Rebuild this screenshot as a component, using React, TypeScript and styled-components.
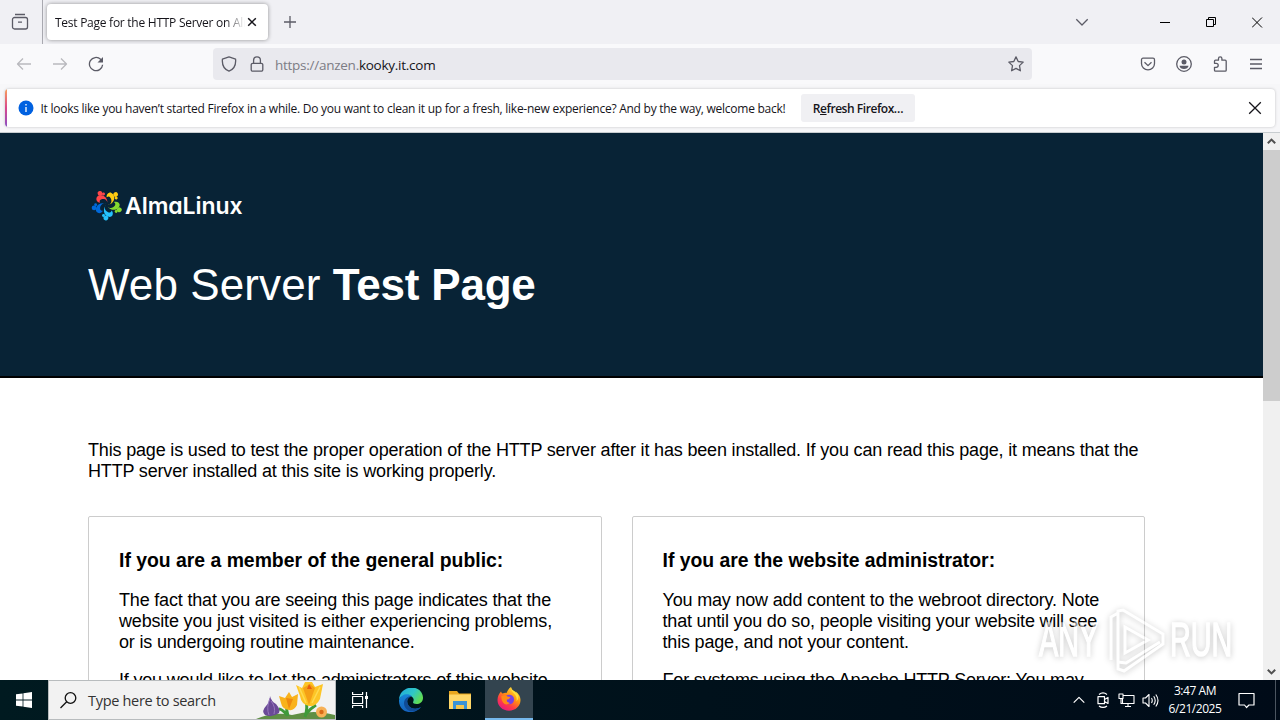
import React from 'react';
import styled, { createGlobalStyle } from 'styled-components';

const App: React.FC = () => {
  return (
    <Screen>
      <GlobalStyle />
      <TabBar>
        <FirefoxView>
          <Icon $size={18} viewBox="0 0 18 18">
            <path d="M4 1.500h10M3.500 4.500h11a2 2 0 0 1 2 2v7.500a2 2 0 0 1-2 2h-11a2 2 0 0 1-2-2v-7.500a2 2 0 0 1 2-2zM7 9.200h4" />
          </Icon>
        </FirefoxView>
        <Tab>
          <TabTitle>Test Page for the HTTP Server on AlmaLinux</TabTitle>
          <Icon $size={10} $color="#15141a" $stroke={1.5} viewBox="0 0 10 10">
            <path d="M1.200 1.200l7.600 7.600M8.800 1.200l-7.600 7.600" />
          </Icon>
        </Tab>
        <NewTab>
          <Icon $size={14} viewBox="0 0 14 14">
            <path d="M7 1v12M1 7h12" />
          </Icon>
        </NewTab>
        <WindowControls>
          <ControlCell $width={120}>
            <Icon $size={14} viewBox="0 0 14 14">
              <path d="M1.300 4.300L7 10l5.700-5.700" />
            </Icon>
          </ControlCell>
          <ControlCell $width={46}>
            <Icon $size={11} $color="#000" $stroke={1} viewBox="0 0 11 11">
              <path d="M0 5.500h10" />
            </Icon>
          </ControlCell>
          <ControlCell $width={46}>
            <Icon $size={11} $color="#000" $stroke={1} viewBox="0 0 11 11">
              <path d="M.5 2.500h7v7h-7zM2.500 2.500v-2h7v7h-2" />
            </Icon>
          </ControlCell>
          <ControlCell $width={46}>
            <Icon $size={11} $color="#000" $stroke={1} viewBox="0 0 11 11">
              <path d="M0 .500l10 10M10 .500l-10 10" />
            </Icon>
          </ControlCell>
        </WindowControls>
      </TabBar>

      <NavBar>
        <NavButtons>
          <Icon $size={16} $color="#b9b9be" viewBox="0 0 16 16">
            <path d="M15 8H1.500M7 2.500L1.500 8 7 13.500" />
          </Icon>
          <Icon $size={16} $color="#b9b9be" viewBox="0 0 16 16">
            <path d="M1 8h13.500M9 2.500L14.500 8 9 13.500" />
          </Icon>
          <Icon $size={16} viewBox="0 0 16 16">
            <path d="M14.600 8.700A6.600 6.600 0 1 1 12.600 3.300L14 4.700" />
            <path d="M15 1v5.500H9.500z" fill="#5b5b66" stroke="none" />
          </Icon>
        </NavButtons>
        <UrlBar>
          <Icon $size={16} viewBox="0 0 16 16">
            <path d="M8 .9l6.600 2.300c.4 4.600-.8 9.600-6.600 12C2.200 12.800 1 7.800 1.400 3.200z" />
          </Icon>
          <Icon $size={16} viewBox="0 0 16 16">
            <path d="M3.700 7.300h8.600a1.500 1.500 0 0 1 1.500 1.500v4.900a1.500 1.500 0 0 1-1.500 1.500H3.700a1.500 1.500 0 0 1-1.500-1.500V8.800a1.500 1.500 0 0 1 1.500-1.500zM4.600 7.300V4.200a3.400 3.400 0 0 1 6.800 0v3.100" />
          </Icon>
          <Url>
            https://anzen.<strong>kooky.it.com</strong>
          </Url>
          <Icon $size={16} viewBox="0 0 16 16">
            <path d="M8 .9l2.200 4.600 5 .6-3.700 3.500.9 5.200L8 12.400l-4.400 2.400.9-5.200L.8 6.100l5-.6z" />
          </Icon>
        </UrlBar>
        <ToolbarActions>
          <Icon $size={16} viewBox="0 0 16 16">
            <path d="M3 2.200h10a1.500 1.500 0 0 1 1.500 1.500v3.700a6.500 6.500 0 0 1-13 0V3.700A1.500 1.500 0 0 1 3 2.200zM4.500 6.200L8 9.600l3.500-3.400" />
          </Icon>
          <Icon $size={16} viewBox="0 0 16 16">
            <circle cx="8" cy="8" r="7.300" />
            <g fill="#5b5b66" stroke="none">
              <circle cx="8" cy="5.900" r="2.500" />
              <path d="M3.500 9.700h9c0 2-2.300 3.300-4.500 3.300S3.500 11.700 3.500 9.700z" />
            </g>
          </Icon>
          <Icon $size={16} viewBox="0 0 16 16">
            <path d="M2.500 7.300V5.200a1 1 0 0 1 1-1h3V2.500a1.700 1.700 0 0 1 3.400 0v1.700h3.300a1 1 0 0 1 1 1v9a1 1 0 0 1-1 1H3.500a1 1 0 0 1-1-1v-2.900h1.700a1.900 1.900 0 0 0 0-4z" />
          </Icon>
          <Icon $size={16} viewBox="0 0 16 16">
            <path d="M2 3.500h12M2 8h12M2 12.500h12" />
          </Icon>
        </ToolbarActions>
      </NavBar>

      <NotificationArea>
        <Notification>
          <InfoBadge viewBox="0 0 16 16">
            <circle cx="8" cy="8" r="7.500" fill="#0061e0" />
            <path d="M8 7v5M8 4v1.500" stroke="#fff" strokeWidth="1.300" />
          </InfoBadge>
          <NotificationText>
            It looks like you haven’t started Firefox in a while. Do you want to clean it up for a fresh, like-new
            experience? And by the way, welcome back!
          </NotificationText>
          <RefreshButton>
            R<u>e</u>fresh Firefox…
          </RefreshButton>
          <CloseNotification>
            <Icon $size={14} $color="#15141a" viewBox="0 0 14 14">
              <path d="M1.200 1.200l11.600 11.600M12.800 1.200L1.200 12.800" />
            </Icon>
          </CloseNotification>
        </Notification>
      </NotificationArea>

      <Viewport>
        <Page>
          <Hero>
            <Brand>
              <AlmaMark />
              <BrandName>AlmaLinux</BrandName>
            </Brand>
            <Title>
              Web Server <strong>Test Page</strong>
            </Title>
          </Hero>
          <Content>
            <Intro>
              This page is used to test the proper operation of the HTTP server after it has been installed. If you can
              read this page, it means that the
              <br />
              HTTP server installed at this site is working properly.
            </Intro>
            <Cards>
              <Card>
                <CardTitle>If you are a member of the general public:</CardTitle>
                <Paragraph>
                  The fact that you are seeing this page indicates that the
                  <br />
                  website you just visited is either experiencing problems,
                  <br />
                  or is undergoing routine maintenance.
                </Paragraph>
                <Paragraph>If you would like to let the administrators of this website</Paragraph>
              </Card>
              <Card>
                <CardTitle>If you are the website administrator:</CardTitle>
                <Paragraph>
                  You may now add content to the webroot directory. Note
                  <br />
                  that until you do so, people visiting your website will see
                  <br />
                  this page, and not your content.
                </Paragraph>
                <Paragraph>For systems using the Apache HTTP Server: You may</Paragraph>
              </Card>
            </Cards>
          </Content>
        </Page>
        <Scrollbar>
          <ScrollArrow viewBox="0 0 17 17">
            <path d="M4.800 10.300l3.700-3.700 3.700 3.700" />
          </ScrollArrow>
          <ScrollThumb />
          <ScrollArrow viewBox="0 0 17 17">
            <path d="M4.800 6.700l3.700 3.700 3.700-3.700" />
          </ScrollArrow>
        </Scrollbar>
        <Watermark>
          <WatermarkWord>ANY</WatermarkWord>
          <svg width="60" height="66" viewBox="0 0 60 66" fill="none" stroke="#fff" strokeWidth="3">
            <path d="M5 53V10l7-4M12 55V4l5-1 40 24v5M19 46V20l23 13zM12 55l8 1 34-21M12 55v7l6 2 39-27v-5" />
          </svg>
          <WatermarkWord>RUN</WatermarkWord>
        </Watermark>
      </Viewport>

      <Taskbar>
        <StartButton>
          <svg width="16" height="16" viewBox="0 0 16 16" fill="#fff">
            <path d="M0 2.300l6.600-.9v6.200H0zM7.400 1.300L16 0v7.600H7.400zM0 8.400h6.600v6.200L0 13.700zM7.400 8.400H16V16l-8.600-1.200z" />
          </svg>
        </StartButton>
        <Search>
          <Icon $size={18} $color="#111" $stroke={1.3} viewBox="0 0 18 18">
            <circle cx="10.500" cy="7" r="5.300" />
            <path d="M6.700 10.800L.5 17" />
          </Icon>
          <SearchText>Type here to search</SearchText>
          <Flowers />
        </Search>
        <TaskButton $width={48}>
          <Icon $size={18} $color="#fff" $stroke={1.2} viewBox="0 0 18 18">
            <path d="M1.600 1v2.500h10V1M1.600 5.500h10v7h-10zM1.600 17v-2.500h10V17M15.500 1v16" />
            <path d="M14 5h3v3h-3z" fill="#fff" stroke="none" />
          </Icon>
        </TaskButton>
        <TaskButton $width={53}>
          <EdgeLogo />
        </TaskButton>
        <TaskButton $width={48}>
          <FolderLogo />
        </TaskButton>
        <TaskButton $width={48} $active>
          <FirefoxLogo />
        </TaskButton>
        <Tray>
          <Icon $size={18} $color="#fff" $stroke={1.2} viewBox="-3 -3 18 18">
            <path d="M.7 8.700L6 3.400l5.300 5.300" />
          </Icon>
          <Icon $size={16} $color="#fff" $stroke={1.2} viewBox="0 0 16 16">
            <path d="M3 4.700h6.500v7H3zM9.500 7.500l3.500-2v6l-3.500-2M4 2.500Q8-.7 12 2.500M4 13.900q4 3 8 0" />
          </Icon>
          <Icon $size={17} $color="#fff" $stroke={1.1} viewBox="0 0 17 17">
            <path d="M5 3.500h11v8H4.500V7M1 2h4v4.500H1zM3 6.500v5h2M10 11.500v3M7 14.500h6" />
          </Icon>
          <Icon $size={17} $color="#fff" $stroke={1.1} viewBox="0 0 17 17">
            <path d="M1 6h2.500L7 2.500v12L3.500 11H1zM9.500 6q1.500 2.500 0 5M11.700 4.200q3 4.300 0 8.600M13.800 2.500q4.400 6 0 12" />
          </Icon>
        </Tray>
        <Clock>
          <ClockLine>3:47 AM</ClockLine>
          <ClockLine>6/21/2025</ClockLine>
        </Clock>
        <ActionCenter>
          <Icon $size={17} $color="#fff" $stroke={1.2} viewBox="0 0 17 17">
            <path d="M1 1.500h15v11.500h-5L8.500 15.500 6.500 13H1z" />
          </Icon>
        </ActionCenter>
        <ShowDesktop />
      </Taskbar>
    </Screen>
  );
};

const almaArms = [
  { color: '#ff4649', angle: -14 },
  { color: '#ffcb12', angle: 58 },
  { color: '#86da2f', angle: 130 },
  { color: '#24c2ff', angle: 202 },
  { color: '#0069da', angle: 274 },
];

const AlmaMark: React.FC = () => (
  <svg width="32" height="32" viewBox="-17 -15.700 32 32">
    {almaArms.map(({ color, angle }) => (
      <g key={color} transform={`rotate(${angle})`} fill={color}>
        <path d="M.8-.5C1.800-4-.5-7-4.500-6.600c-1.500.2-2 1.300-1.900 3-2.600-1.200-3.400-4.200-1.700-6.200C-4.500-12.500 3-9.500.8-.5z" />
        <circle cx="-4" cy="-12.700" r="2.400" />
        <circle cx="-.8" cy="-11.300" r="1.500" />
      </g>
    ))}
  </svg>
);

const Flowers: React.FC = () => (
  <svg width="79" height="38" viewBox="0 0 79 38">
    <path d="M0 38Q18 30 36 34q22-6 43 0v4z" fill="#5f8f45" />
    <path d="M32 35q-2-6-1-12M49 36q3-9 1-17M50 33q5-6 10-9M31 34q-5-6-8-6" stroke="#3f9a3b" strokeWidth="3" fill="none" />
    <path d="M14 15q1 5 6 8 5 6 3 9-7 5-14 2-4-4 1-9 4-4 4-10z" fill="#6a4a97" />
    <path d="M14 17q-4 10-1 17M15 20q5 6 3 13" stroke="#9678bd" fill="none" />
    <path d="M23 15l6 2 4-6 3 5 6-3-1 11q-3 6-8 5-7-1-8-7z" fill="#f9b21c" />
    <path d="M30 17l3 11 4-10z" fill="#ee8a10" />
    <path d="M40 4l6 3 3-6 7 0 3 5 8-3-3 15q-4 8-11 7-8-2-9-10z" fill="#fdc526" />
    <path d="M47 7l6 17 6-17-5-4z" fill="#f4a016" />
    <path d="M43 6l7 16M64 6l-8 16" stroke="#ffda50" strokeWidth="1.500" />
    <path d="M51 8l2-5 3 5z" fill="#e95d0c" />
    <circle cx="65.500" cy="31" r="5.500" fill="#f7b156" />
    <circle cx="65.500" cy="31" r="2.200" fill="#d96b16" />
  </svg>
);

const EdgeLogo: React.FC = () => (
  <svg width="24" height="24" viewBox="0 0 24 24">
    <defs>
      <linearGradient id="edgeTop" x1="0" y1="0" x2="1" y2=".5">
        <stop offset="0" stopColor="#1fa8e0" />
        <stop offset=".6" stopColor="#2fc7c6" />
        <stop offset="1" stopColor="#5fdc55" />
      </linearGradient>
      <linearGradient id="edgeSide" x1="0" y1="0" x2="0" y2="1">
        <stop offset="0" stopColor="#1787d8" />
        <stop offset="1" stopColor="#1461bd" />
      </linearGradient>
    </defs>
    <path d="M0 11.500C1-3.500 23-4.500 24 9.500c.2 4-3 6.500-6.500 6.500-3 0-4-1.300-3.200-2.600C17 8 5 3.500 0 11.500z" fill="url(#edgeTop)" />
    <path d="M0 12C2 6 9 4.500 12.800 8 8 9.500 7 14 9.500 17.500c3 4 8.500 4 12.500 1.500C15 28-.5 25 0 12z" fill="url(#edgeSide)" />
    <path d="M12.800 8C8 9.500 7 14 9.500 17.500c3 4 8.500 4 12.500 1.500-4 5-11 6-15 1.500C3 16 5 8.500 12.800 8z" fill="#104b95" />
  </svg>
);

const FolderLogo: React.FC = () => (
  <svg width="24" height="20" viewBox="0 0 24 20">
    <path d="M0 1h8l2 2.500h12V19H0z" fill="#e9a71f" />
    <path d="M0 4.500h22V19H0z" fill="#ffd768" />
    <path d="M4 11h14v8h-3v-4H7v4H4z" fill="#3a93d5" />
    <path d="M7 15h8v4H7z" fill="#f5c64c" />
  </svg>
);

const FirefoxLogo: React.FC = () => (
  <svg width="24" height="24" viewBox="0 0 24 24">
    <defs>
      <linearGradient id="foxFire" x1=".85" y1="0" x2=".2" y2="1">
        <stop offset="0" stopColor="#fff04d" />
        <stop offset=".4" stopColor="#ff980e" />
        <stop offset=".7" stopColor="#ff3b47" />
        <stop offset="1" stopColor="#e31587" />
      </linearGradient>
    </defs>
    <path d="M4 4.500q.5 1.500 1.500 2Q8 5.500 9.500 6 11 2 14 0q.5 3 3.500 5 1 .8 2 2.500 0-1.500-.7-3C22 7 23.500 10 23.500 13c0 6-5 10.700-11.500 10.700S.5 19 .5 13C.5 9.500 2 6.500 4 4.500z" fill="url(#foxFire)" />
    <circle cx="12.300" cy="12.500" r="4.800" fill="#7542e5" />
    <path d="M4.500 9q4-1.500 6 .5l3 .5q-1 2.500-3.500 2.500-1 3 3 3.500-4 3-7-.5-2-3-1.500-6.500z" fill="#ff8a16" />
    <path d="M14 1q0 3 3 5.500 3.500 3.500 2.500 8 2-2 2-5.500-1-3-3.500-4.500-3-1.500-4-3.500z" fill="#ffde3a" />
  </svg>
);

const GlobalStyle = createGlobalStyle`
  * {
    box-sizing: border-box;
  }
  body {
    margin: 0;
    overflow: hidden;
  }
  svg {
    display: block;
    flex-shrink: 0;
  }
`;

const Screen = styled.div`
  width: 1280px;
  height: 720px;
  display: flex;
  flex-direction: column;
  overflow: hidden;
  font-family: 'Open Sans', sans-serif;
  font-size: 12px;
  color: #15141a;
  white-space: nowrap;
`;

const Icon = styled.svg<{ $size: number; $color?: string; $stroke?: number }>`
  width: ${({ $size }) => $size}px;
  height: ${({ $size }) => $size}px;
  fill: none;
  stroke: ${({ $color }) => $color ?? '#5b5b66'};
  stroke-width: ${({ $stroke }) => $stroke ?? 1.3};
  stroke-linejoin: round;
`;

const TabBar = styled.div`
  height: 44px;
  display: flex;
  align-items: center;
  background: #f0f0f4;
`;

const FirefoxView = styled.div`
  width: 43px;
  height: 44px;
  display: flex;
  align-items: center;
  padding-left: 11px;
  border-right: 1px solid #a9a9b0;
`;

const Tab = styled.div`
  width: 221px;
  height: 36px;
  margin-left: 4px;
  padding: 0 11px 0 8px;
  display: flex;
  align-items: center;
  justify-content: space-between;
  background: #fff;
  border-radius: 4px;
  box-shadow: 0 0 4px rgba(0, 0, 0, 0.4);
`;

const TabTitle = styled.div`
  width: 190px;
  overflow: hidden;
  letter-spacing: -0.26px;
  mask-image: linear-gradient(to left, transparent, #000 20px);
`;

const NewTab = styled.div`
  margin-left: 15px;
`;

const WindowControls = styled.div`
  margin-left: auto;
  display: flex;
`;

const ControlCell = styled.div<{ $width: number }>`
  width: ${({ $width }) => $width}px;
  display: flex;
  align-items: center;
  justify-content: center;
`;

const NavBar = styled.div`
  height: 40px;
  display: flex;
  align-items: center;
  background: #f9f9fb;
`;

const NavButtons = styled.div`
  width: 213px;
  padding-left: 16px;
  display: flex;
  gap: 20px;
`;

const UrlBar = styled.div`
  width: 819px;
  height: 32px;
  padding: 0 8px;
  display: flex;
  align-items: center;
  gap: 12px;
  background: #e9e9ee;
  border-radius: 4px;
`;

const Url = styled.div`
  flex: 1;
  margin-left: -2px;
  padding-top: 1px;
  font-size: 13.5px;
  letter-spacing: -0.26px;
  color: #7c7c85;

  strong {
    font-weight: 400;
    color: #15141a;
  }
`;

const ToolbarActions = styled.div`
  margin-left: auto;
  margin-right: 16px;
  display: flex;
  gap: 20px;
`;

const NotificationArea = styled.div`
  height: 49px;
  padding: 5px 5px 0;
  background: #f7f7f9;
  border-bottom: 1px solid #c8cdd0;
`;

const Notification = styled.div`
  height: 38px;
  display: flex;
  align-items: center;
  background: linear-gradient(#f9a05a, #d9478c, #8a4fc4) left / 2px 100% no-repeat #fff;
  border-radius: 4px;
  box-shadow: 0 0 3px rgba(0, 0, 0, 0.22);
  padding-left: 13px;
`;

const InfoBadge = styled.svg`
  width: 16px;
  height: 16px;
`;

const NotificationText = styled.div`
  width: 766px;
  padding-left: 6.5px;
  padding-top: 1px;
  letter-spacing: -0.262px;
`;

const RefreshButton = styled.div`
  width: 114px;
  height: 28px;
  line-height: 29px;
  margin-left: 1px;
  text-align: center;
  font-weight: 600;
  letter-spacing: -0.45px;
  background: #f0f0f3;
  border-radius: 3px;
`;

const CloseNotification = styled.div`
  margin-left: auto;
  margin-right: 13px;
`;

const Viewport = styled.div`
  position: relative;
  height: 547px;
  display: flex;
  overflow: hidden;
`;

const Page = styled.div`
  width: 1263px;
  background: #fff;
  color: #000;
  font-family: 'Liberation Sans', Arial, sans-serif;
  font-size: 18px;
  line-height: 21px;
`;

const Hero = styled.div`
  height: 245px;
  padding: 56px 88px 0;
  background: #082336;
  border-bottom: 2px solid #000;
  color: #fff;
`;

const Brand = styled.div`
  height: 32px;
  padding-left: 2px;
  display: flex;
  align-items: center;
`;

const BrandName = styled.div`
  margin-left: 3px;
  padding-top: 3px;
  font-family: Inter, sans-serif;
  font-size: 23px;
  font-weight: 600;
  letter-spacing: -0.05px;
  font-feature-settings: 'cv11';
`;

const Title = styled.div`
  margin-top: 38px;
  font-size: 44px;
  line-height: 52px;
  letter-spacing: 0.1px;

  strong {
    letter-spacing: -0.2px;
  }
`;

const Content = styled.div`
  padding: 62px 118px 0 88px;
  letter-spacing: -0.18px;
`;

const Intro = styled.div`
  height: 76px;
  letter-spacing: -0.172px;
`;

const Cards = styled.div`
  display: grid;
  grid-template-columns: 513.5px 513.5px;
  gap: 30px;
`;

const Card = styled.div`
  height: 300px;
  padding: 32px 30px;
  border: 1px solid #ccc;
  border-radius: 2px;
`;

const CardTitle = styled.div`
  font-size: 19.4px;
  line-height: 22px;
  font-weight: 700;
  letter-spacing: -0.01px;
  margin-bottom: 19px;
`;

const Paragraph = styled.div`
  margin-bottom: 17px;
`;

const Scrollbar = styled.div`
  width: 17px;
  background: #f0f0f0;
  display: flex;
  flex-direction: column;
`;

const ScrollArrow = styled.svg`
  width: 17px;
  height: 17px;
  fill: none;
  stroke: #505050;
  stroke-width: 2;
`;

const ScrollThumb = styled.div`
  height: 251px;
  margin-bottom: auto;
  background: #cdcdcd;
`;

const Watermark = styled.div`
  position: absolute;
  left: 1039px;
  top: 474px;
  display: flex;
  align-items: center;
  gap: 4px;
  filter: drop-shadow(0 1px 3px rgba(0, 0, 0, 0.4));
  opacity: 0.55;
`;

const WatermarkWord = styled.div`
  width: 63px;
  font-family: 'Liberation Sans', Arial, sans-serif;
  font-size: 48px;
  line-height: 48px;
  color: #fff;
  -webkit-text-stroke: 1.5px #fff;
  transform: scaleX(0.6);
  transform-origin: left;
`;

const Taskbar = styled.div`
  height: 40px;
  display: flex;
  background: linear-gradient(90deg, #001a20, #00131c 40%, #000b18);
  color: #fff;
`;

const StartButton = styled.div`
  width: 48px;
  display: flex;
  align-items: center;
  justify-content: center;
`;

const Search = styled.div`
  width: 288px;
  padding-left: 11px;
  display: flex;
  align-items: center;
  background: #f2f2f2;
  border: 1px solid #b8bcbe;
`;

const SearchText = styled.div`
  width: 179px;
  padding-left: 10px;
  padding-top: 1px;
  font-size: 14.5px;
  letter-spacing: -0.3px;
  color: #333;
`;

const TaskButton = styled.div<{ $width: number; $active?: boolean }>`
  width: ${({ $width }) => $width}px;
  display: flex;
  align-items: center;
  justify-content: center;
  background: ${({ $active }) => ($active ? '#33444f' : 'transparent')};
  border-bottom: ${({ $active }) => ($active ? '2px solid #76b9ed' : 'none')};
`;

const Tray = styled.div`
  margin-left: auto;
  display: flex;
  align-items: center;
  gap: 7px;
`;

const Clock = styled.div`
  width: 71px;
  padding-top: 2px;
  padding-left: 1px;
  text-align: center;
`;

const ClockLine = styled.div`
  line-height: 18px;
  letter-spacing: -0.45px;
`;

const ActionCenter = styled.div`
  width: 45px;
  display: flex;
  align-items: center;
  padding-left: 8px;
`;

const ShowDesktop = styled.div`
  width: 5px;
  border-left: 1px solid #4b5560;
`;

export default App;
